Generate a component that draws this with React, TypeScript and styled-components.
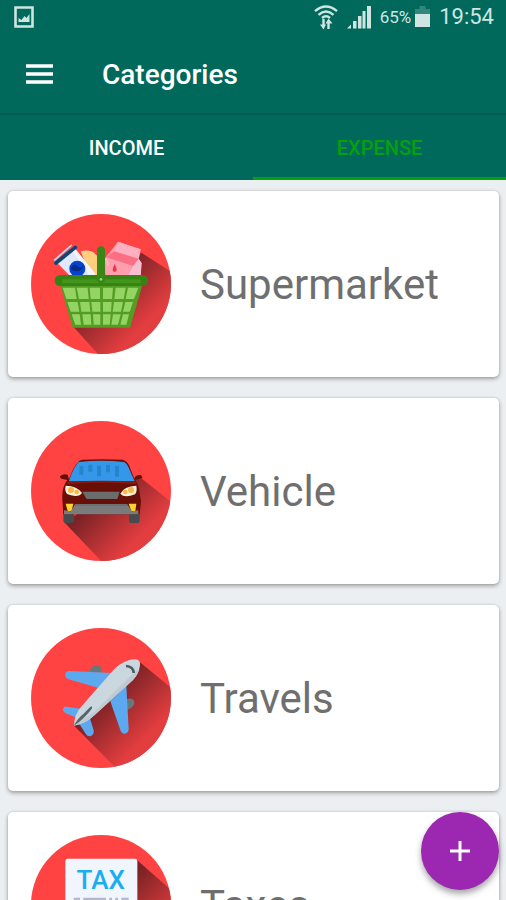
import React, { useId, useState } from "react";
import styled, { createGlobalStyle } from "styled-components";

const GlobalStyle = createGlobalStyle`
  * { box-sizing: border-box; }
  body {
    margin: 0;
    background: #eceff1;
    font-family: Roboto, "Liberation Sans", sans-serif;
  }
`;

const Screen = styled.div`
  position: relative;
  display: flex;
  flex-direction: column;
  height: 100vh;
  overflow: hidden;
`;

const Header = styled.header`
  flex: none;
  background: #00695c;
  color: #fff;
`;

const StatusBar = styled.div`
  display: flex;
  align-items: center;
  height: 34px;
  padding: 0 12px 0 14px;
  color: #cfe5e1;
`;

const StatusIcons = styled.div`
  display: flex;
  align-items: center;
  gap: 9px;
  margin-left: auto;
`;

const Battery = styled.span`
  display: flex;
  align-items: center;
  gap: 4px;
  font-size: 17px;
  line-height: 20px;
`;

const Clock = styled.time`
  font-size: 22px;
  line-height: 28px;
`;

const AppBar = styled.div`
  display: flex;
  align-items: center;
  gap: 41px;
  height: 81px;
  padding: 0 18px;
  border-bottom: 2px solid #005b50;
`;

const MenuButton = styled.button`
  display: flex;
  padding: 8px;
  border: 0;
  background: none;
  color: inherit;
`;

const Title = styled.h1`
  margin: 0;
  padding-top: 2px;
  font-size: 28px;
  font-weight: 500;
  line-height: 32px;
`;

const Tabs = styled.div`
  display: flex;
  height: 65px;
`;

const Tab = styled.button<{ $active: boolean }>`
  flex: 1;
  padding: 3px 0 0;
  border: 0;
  border-bottom: 3px solid ${(p) => (p.$active ? "#05a010" : "transparent")};
  background: none;
  color: ${(p) => (p.$active ? "#05a010" : "#fff")};
  font-family: inherit;
  font-size: 20px;
  font-weight: 500;
  line-height: 24px;
`;

const List = styled.ul`
  display: flex;
  flex: 1;
  flex-direction: column;
  gap: 21px;
  min-height: 0;
  margin: 0;
  padding: 11px 7px 11px 8px;
  overflow-y: auto;
  list-style: none;
  scrollbar-width: none;
`;

const Card = styled.li`
  display: flex;
  flex: none;
  align-items: center;
  gap: 29px;
  height: 186px;
  padding: 0 23px;
  border-radius: 5px;
  background: #fff;
  box-shadow: 0 2px 4px rgba(0, 0, 0, 0.32), 0 0 3px rgba(0, 0, 0, 0.12);
`;

const CardLabel = styled.span`
  padding-top: 2px;
  color: #6f6f6f;
  font-size: 42px;
  line-height: 52px;
`;

const Fab = styled.button`
  position: absolute;
  right: 7px;
  bottom: 10px;
  display: flex;
  align-items: center;
  justify-content: center;
  width: 78px;
  height: 78px;
  padding: 0;
  border: 0;
  border-radius: 50%;
  background: #9c27b0;
  box-shadow: 0 4px 6px rgba(0, 0, 0, 0.35);
`;

const PictureIcon = () => (
  <svg width="20" height="22" viewBox="0 0 20 22" aria-hidden="true">
    <path d="M1.5 1.5h17v19h-17z" fill="none" stroke="currentColor" strokeWidth="2.6" />
    <path d="M4.5 16v-4l3 2 3-4 2 2 3-4v8z" fill="currentColor" />
  </svg>
);

const WifiIcon = () => (
  <svg width="24" height="25" viewBox="0 0 24 25" aria-hidden="true">
    <g fill="none" stroke="currentColor" strokeWidth="2.4">
      <path d="M1 6.2Q12-3 23 6.2" />
      <path d="M4.5 9.800Q12 3.200 19.500 9.800" />
      <path d="M8 13Q12 9.600 16 13" />
      <path d="M9.500 14v7M14.500 24v-7" />
    </g>
    <path d="M6 19.500h6l-2.500 5zM11.500 18.500h7L14.500 13.500z" fill="currentColor" />
  </svg>
);

const SignalIcon = () => (
  <svg width="24" height="23" viewBox="0 0 24 23" aria-hidden="true">
    <path d="M0 22.5l4-4v4zM6 15h3.5v7.5H6zM11 10h3.5v12.5H11zM15.500 5h3v17.500h-3zM20 0h4v22.500h-4z" fill="currentColor" />
  </svg>
);

const BatteryIcon = () => (
  <svg width="15" height="22" viewBox="0 0 15 22" aria-hidden="true">
    <path d="M4.500 0h6v3H15v5H0V3h4.500z" fill="#32877c" />
    <path d="M0 8h15v13H0z" fill="currentColor" />
  </svg>
);

const MenuIcon = () => (
  <svg width="27" height="20" viewBox="0 0 27 20" aria-hidden="true">
    <path d="M0 2h27M0 10h27M0 18h27" stroke="currentColor" strokeWidth="3.600" />
  </svg>
);

const PlusIcon = () => (
  <svg width="22" height="22" viewBox="0 0 22 22" aria-hidden="true">
    <path d="M1 11h20M11 1v20" stroke="#fff" strokeWidth="3" />
  </svg>
);

type BadgeProps = { left: number; top: number; shadow: string; children: React.ReactNode };

function Badge({ left, top, shadow, children }: BadgeProps) {
  const id = useId();
  return (
    <svg width="140" height="140" viewBox={`${left} ${top} 420 420`} aria-hidden="true">
      <defs>
        <clipPath id={`${id}c`}>
          <circle cx={left + 210} cy={top + 210} r="210" />
        </clipPath>
        <linearGradient
          id={`${id}g`}
          gradientUnits="userSpaceOnUse"
          x1={left + 215}
          y1={top + 215}
          x2={left + 335}
          y2={top + 335}
        >
          <stop offset="0" stopColor="#7a2225" />
          <stop offset="1" stopColor="#e23d3f" />
        </linearGradient>
      </defs>
      <circle cx={left + 210} cy={top + 210} r="210" fill="#ff4343" />
      <path d={shadow} fill={`url(#${id}g)`} clipPath={`url(#${id}c)`} />
      {children}
    </svg>
  );
}

const BasketBadge = () => (
  <Badge left={33} top={40} shadow="M364 156L500 244V500H270L158 376z">
    <path d="M182 152q30-8 46 10l14 14v50h-30z" fill="#ffcf7d" />
    <path d="M294 123l68 23-6 28 8 12-2 40H256l-2-52z" fill="#ff9fae" />
    <path d="M294 123l68 23-6 28-74-22z" fill="#ffafc0" />
    <path d="M282 152l74 22-16 22-82-26z" fill="#fb6f85" />
    <path d="M356 174l9 14-3 38h-38l16-30z" fill="#f9bdd2" />
    <path d="M284 190q-12 22 0 24q12-2 0-24z" fill="#ec3553" />
    <path d="M256 174q8 8 8 22" fill="none" stroke="#ffb8bf" strokeWidth="5" />
    <path d="M107 182l54-43 66 82-74 8z" fill="#dfe9fb" />
    <path d="M161 139l66 82-18 4-56-80z" fill="#f1f5fd" />
    <path d="M108 187l58-47" stroke="#144471" strokeWidth="11" strokeLinecap="round" />
    <path d="M104 178l50-44" stroke="#b8d9f5" strokeWidth="5" strokeLinecap="round" />
    <circle cx="172" cy="204" r="24" fill="#0642cf" />
    <path d="M152 202q12-16 20-6t18-2q-3 18-20 18-12 0-18-10z" fill="#092c85" />
    <path d="M120 250h248l-38 131H158z" fill="#549d25" />
    <g fill="#93d464">
      <path d="M128 261h37l5 34h-31zM170 261h33l3 34h-29zM209 261h31v34h-28zM249 261h30l-3 34h-27zM287 261h30l-6 34h-28zM324 261h31l-13 34h-25z" />
      <path d="M142 304h31l5 29h-26zM180 304h28l3 29h-27zM214 304h27v29h-24zM249 304h26l-2 29h-24zM282 304h27l-6 29h-25zM316 304h23l-10 29h-20z" />
      <path d="M155 341h24l4 31h-17zM187 341h25l2 31h-23zM219 341h22v31h-20zM249 341h23l-3 31h-20zM279 341h23l-8 31h-20zM309 341h18l-8 31h-18z" />
    </g>
    <rect x="104" y="223" width="280" height="33" rx="16" fill="#348313" />
    <path d="M126 242h236" stroke="#44951b" strokeWidth="12" />
    <path d="M243 149v86" stroke="#388617" strokeWidth="24" strokeLinecap="round" />
    <circle cx="243" cy="236" r="4" fill="#9bd875" />
  </Badge>
);

const CarBadge = () => (
  <Badge left={33} top={31} shadow="M359 199L500 310V500H290L132 334z">
    <rect x="130" y="300" width="32" height="37" rx="7" fill="#464b4d" />
    <rect x="327" y="300" width="32" height="37" rx="7" fill="#464b4d" />
    <path d="M121 196q8-8 22-4l4 14q14-39 26-50 4-7 14-9 60-3 121 0 12 3 19 17l16 40q3-12 18-11 8 3 5 10l-21 5q10 10 13 33l5 31-4 39H130l-3-44q-2-39 15-59l-18-4q-7-5-3-8z" fill="#681008" />
    <path d="M147 210q16-46 30-56 65-7 135 0 10 5 17 24l15 34q-100-2-195 0z" fill="#3497e9" />
    <path d="M184 166v26M211 162v21M237 165v32M264 163v22M291 166v32" stroke="#2684cd" strokeWidth="12" />
    <path d="M142 217q102-8 206 0" fill="none" stroke="#861b0e" strokeWidth="6" />
    <path d="M187 243h112l-7 22h-92z" fill="#6b6d6d" />
    <path d="M137 225q35 1 49 22-10 15-43 4-10-8-6-26zM349 225q-37 1-48 24 12 14 44 2 7-8 4-26z" fill="#fff0d8" />
    <g fill="#f5b84d">
      <circle cx="153" cy="238" r="9" />
      <circle cx="170" cy="244" r="7" />
      <circle cx="333" cy="238" r="9" />
      <circle cx="316" cy="244" r="7" />
    </g>
    <path d="M137 279h23l-5 22h-12zM349 279h-23l8 22h12z" fill="#ffd22d" />
    <path d="M166 280h155l15 22 19-3v12H132v-12l20 3z" fill="#7a7b7c" />
    <path d="M166 280h155l4 6H162z" fill="#6c6f70" />
  </Badge>
);

const PlaneBadge = () => (
  <Badge left={33} top={37} shadow="M359 139L500 255V500H330L162 330z">
    <path d="M208 166q8-20 26-18 14 5 9 24zM321 250q22-6 22 12-1 16-26 22z" fill="#68787b" />
    <path d="M146 166l132 6-44 44-88-25q-13-5-10-16 2-8 10-9z" fill="#5ca9ef" />
    <path d="M319 210l7 130q-1 13-12 14-10 0-13-11l-30-86z" fill="#5ca9ef" />
    <path d="M141 273l47 7-17 27-33-14q-11-6-9-13 3-9 12-7zM207 299l14 45q2 12-8 17-10 3-16-7l-22-34z" fill="#5ca9ef" />
    <path d="M162 330q0-35 26-62L283 160q31-29 63-29 16 1 14 18-3 25-21 44L224 298q-29 28-62 32z" fill="#cbd7df" />
    <path d="M162 330q2-5 10-14 30-7 60-36L339 174q12-12 19-12-6 17-19 31L224 298q-29 28-62 32z" fill="#bdcad4" />
    <path d="M161 331q12-24 30-37 16-17 23-22 5 2 1 8-24 31-54 51z" fill="#596569" />
    <path d="M318 151q22 1 23 21" fill="none" stroke="#4f5d61" strokeWidth="8" />
  </Badge>
);

const TaxText = styled.text`
  font-family: Roboto, "Liberation Sans", sans-serif;
  font-size: 78px;
  font-weight: 500;
`;

const TaxBadge = () => (
  <Badge left={93} top={160} shadow="M411 235L560 366V620H360L196 500z">
    <rect x="196" y="231" width="216" height="290" rx="7" fill="#f1f5fe" />
    <TaxText x="302" y="322" textAnchor="middle" fill="#18aeef">TAX</TaxText>
    <path d="M221 352h19M250 352h68M328 352h8M346 352h8M364 352h22" stroke="#b5b8cc" strokeWidth="8" />
    <path d="M221 382h19M250 382h68M328 382h8M346 382h40" stroke="#b5b8cc" strokeWidth="8" />
  </Badge>
);

const categories = [
  { name: "Supermarket", Icon: BasketBadge },
  { name: "Vehicle", Icon: CarBadge },
  { name: "Travels", Icon: PlaneBadge },
  { name: "Taxes", Icon: TaxBadge },
];

const tabNames = ["INCOME", "EXPENSE"];

export default function App() {
  const [tab, setTab] = useState("EXPENSE");
  return (
    <Screen>
      <GlobalStyle />
      <Header>
        <StatusBar>
          <PictureIcon />
          <StatusIcons>
            <WifiIcon />
            <SignalIcon />
            <Battery>
              65%
              <BatteryIcon />
            </Battery>
            <Clock>19:54</Clock>
          </StatusIcons>
        </StatusBar>
        <AppBar>
          <MenuButton aria-label="Open menu">
            <MenuIcon />
          </MenuButton>
          <Title>Categories</Title>
        </AppBar>
        <Tabs role="tablist">
          {tabNames.map((name) => (
            <Tab key={name} role="tab" aria-selected={tab === name} $active={tab === name} onClick={() => setTab(name)}>
              {name}
            </Tab>
          ))}
        </Tabs>
      </Header>
      <List>
        {categories.map(({ name, Icon }) => (
          <Card key={name}>
            <Icon />
            <CardLabel>{name}</CardLabel>
          </Card>
        ))}
      </List>
      <Fab aria-label="Add category">
        <PlusIcon />
      </Fab>
    </Screen>
  );
}
